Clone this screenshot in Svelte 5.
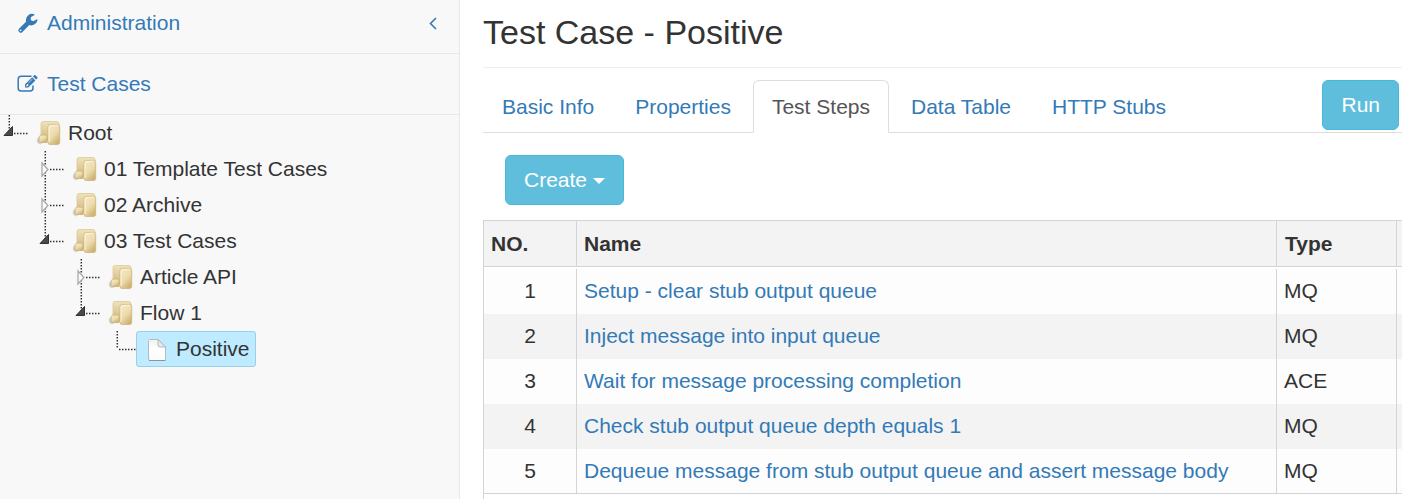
<script>
  const tree = {
    label: 'Root', open: true, children: [
      { label: '01 Template Test Cases', children: [] },
      { label: '02 Archive', children: [] },
      { label: '03 Test Cases', open: true, children: [
        { label: 'Article API', children: [] },
        { label: 'Flow 1', open: true, children: [{ label: 'Positive', leaf: true }] },
      ] },
    ],
  };
  const tabs = ['Basic Info', 'Properties', 'Test Steps', 'Data Table', 'HTTP Stubs'];
  const steps = [
    ['Setup - clear stub output queue', 'MQ'],
    ['Inject message into input queue', 'MQ'],
    ['Wait for message processing completion', 'ACE'],
    ['Check stub output queue depth equals 1', 'MQ'],
    ['Dequeue message from stub output queue and assert message body', 'MQ'],
  ];
  let active = $state('Test Steps');
</script>

<svelte:head><title>Test Case - Positive</title></svelte:head>

<svg class="defs" aria-hidden="true">
  <defs>
    <linearGradient id="gold" x1="0" y1="0" x2=".6" y2="1">
      <stop offset="0" stop-color="#f8eccb" /><stop offset=".6" stop-color="#ecdbac" /><stop offset="1" stop-color="#d0b475" />
    </linearGradient>
    <linearGradient id="back" x1="0" y1="0" x2="0" y2="1">
      <stop offset="0" stop-color="#f0e2ba" /><stop offset="1" stop-color="#cfb478" />
    </linearGradient>
    <linearGradient id="paper" x1="0" y1="0" x2="0" y2="1">
      <stop offset="0" stop-color="#f0f0f0" /><stop offset=".4" stop-color="#ffffff" /><stop offset="1" stop-color="#fafafa" />
    </linearGradient>
    <radialGradient id="shade">
      <stop offset="0" stop-color="#777" stop-opacity=".7" /><stop offset="1" stop-color="#777" stop-opacity="0" />
    </radialGradient>
  </defs>
</svg>

{#snippet node(item, last)}
  <li>
    <div class="row">
      <svg class="joint" viewBox="0 0 28 36" aria-hidden="true">
        <path class="dots" d={last ? 'M9.300 0V18' : 'M9.300 0V36'} />
        <path class="dots" d={item.leaf ? 'M11 18.500H28' : 'M14 18.500H28'} />
        {#if item.open}
          <path d="M12.500 11.500V20.500H4Z" fill="#4a4a4a" stroke="#333" />
        {:else if !item.leaf}
          <path d="M6 12L12 18.500L6 25Z" fill="#fafafa" stroke="#aaa" stroke-width="1.300" />
        {/if}
      </svg>
      <a href="#node" class="node" class:selected={item.leaf}>
        <svg class="icon" viewBox="0 0 26 28" aria-hidden="true">
          {#if item.leaf}
            <path d="M5.500 4.500H14L21.500 12V24.500Q21.500 25.500 20.500 25.500H6.500Q4.500 25.500 4.500 24V5.500Z" fill="url(#paper)" stroke="#b5bbbd" />
            <path d="M5 25.500H21.500" stroke="#8d9396" />
            <path d="M14 4.500V10Q14 12 16 12H21.500Z" fill="#e7eaeb" stroke="#b3b8ba" />
          {:else}
            <ellipse cx="4" cy="21.500" rx="4" ry="4.500" fill="url(#shade)" />
            <path d="M5 4.500Q5 2.500 7 2.500H20.500Q23 2.500 23 5V22.500H5Z" fill="url(#back)" stroke="#dac998" stroke-width=".8" />
            <path d="M4 17Q4 16 5 16H9.500Q11 16 11 17.500V23.500H4Q3 23.500 3 22.500V18.500Q3 17.500 4 17Z" fill="url(#gold)" stroke="#c8b077" stroke-width=".8" />
            <path d="M12 8Q12 5.600 14 5.500L21.500 5.300Q23.700 5.300 23.700 7.500V23.500Q23.700 25.500 21.700 25.500H14Q12 25.500 12 23.500Z" fill="url(#gold)" stroke="#cdb67f" stroke-width=".8" />
            <path d="M13 23V8Q13 6.500 14.500 6.400L22 6.200" fill="none" stroke="#fffae7" stroke-width=".8" />
          {/if}
        </svg>
        <span>{item.label}</span>
      </a>
    </div>
    {#if item.open}
      <ul>
        {#each item.children as child, i}
          {@render node(child, i === item.children.length - 1)}
        {/each}
      </ul>
    {/if}
  </li>
{/snippet}

<div class="page">
  <aside>
    <a class="menu" href="#admin">
      <svg class="glyph" viewBox="0 0 21 21" aria-hidden="true">
        <path fill="currentColor" fill-rule="evenodd" d="M2 15.700L9 8.800Q8.400 4.600 11.500 2Q14 0 17.300 1.200L17.500 1.900L13.800 4.200V7L16 8.300L20 6.200L20.500 6.600Q20.100 10.300 16.700 11.800Q14.200 12.800 12.300 12.100L5.200 19.200Q3.800 20.500 2.400 19.200L1.800 18.600Q.5 17.200 2 15.700ZM3.600 16.400A.9 .9 0 1 0 3.600 18.200A.9 .9 0 1 0 3.600 16.400Z" />
      </svg>
      <span>Administration</span>
      <svg class="chevron" viewBox="0 0 8 13" aria-hidden="true"><path d="M7 1L1.500 6.500L7 12" fill="none" stroke="currentColor" stroke-width="1.600" /></svg>
    </a>
    <a class="menu" href="#cases">
      <svg class="glyph" viewBox="0 0 21 21" aria-hidden="true">
        <path d="M14 2.200H4.200Q1.200 2.200 1.200 5.200V14Q1.200 17 4.200 17H13Q16 17 16 14V12" fill="none" stroke="currentColor" stroke-width="1.500" stroke-linecap="round" />
        <path fill="currentColor" fill-rule="evenodd" d="M15.200 3.200L18.400 6.400L11.300 13.500H8.100V10.300ZM9.400 11V12.200H10.600L11.700 11.100L10.500 9.900ZM11.300 9.500L15.400 5.400L15.100 5.100L11 9.200ZM16 2.400L17.100 1.300Q17.800 .7 18.500 1.300L20.200 3Q20.900 3.700 20.200 4.500L19.100 5.600Z" />
      </svg>
      <span>Test Cases</span>
    </a>
    <ul class="tree">{@render node(tree, true)}</ul>
  </aside>

  <main>
    <h1>Test Case - Positive</h1>
    <div class="bar">
      <nav>
        {#each tabs as tab}
          <button class="tab" class:active={tab === active} onclick={() => (active = tab)}>{tab}</button>
        {/each}
      </nav>
      <button class="btn">Run</button>
    </div>
    <div class="tools"><button class="btn">Create <span class="caret"></span></button></div>
    <div class="grid">
      <table>
        <thead>
          <tr><th class="no">NO.</th><th class="name">Name</th><th class="type">Type</th><th aria-label="Actions"></th></tr>
        </thead>
        <tbody>
          <tr class="space" aria-hidden="true"><td colspan="4"></td></tr>
          {#each steps as [name, type], i}
            <tr><td class="num">{i + 1}</td><td><a href="#step">{name}</a></td><td>{type}</td><td></td></tr>
          {/each}
        </tbody>
      </table>
    </div>
  </main>
</div>

<style>
  :global(body) { margin: 0; overflow: hidden; }
  * { box-sizing: border-box; }
  .page {
    display: flex;
    min-height: 100vh;
    font: 21px/30px "Liberation Sans", Arial, sans-serif;
    color: #333;
    background: #fff;
  }
  .defs { position: absolute; width: 0; height: 0; }
  a { color: #337ab7; text-decoration: none; }
  aside { flex: 0 0 460px; background: #f8f8f8; border-right: 1px solid #e7e7e7; }
  .menu {
    display: flex;
    align-items: center;
    height: 61px;
    padding: 0 22px 0 17px;
    border-bottom: 1px solid #e7e7e7;
  }
  .menu:first-child { height: 54px; padding-bottom: 7px; }
  .glyph { width: 21px; height: 21px; margin-right: 9px; }
  .chevron { width: 8px; height: 13px; margin-left: auto; }
  ul { list-style: none; margin: 0; padding: 0 0 0 36px; }
  .tree { padding: 0; }
  .row { display: flex; height: 36px; }
  .joint { flex: none; width: 28px; height: 36px; }
  .dots { fill: none; stroke: #333; stroke-width: 1.500; stroke-dasharray: 1.500 1.500; }
  .node {
    display: flex;
    align-items: center;
    padding: 0 5px 0 7px;
    border: 1px solid transparent;
    border-radius: 3px;
    color: #333;
    white-space: nowrap;
  }
  .selected { background: #beebff; border-color: #99d0e8; }
  .icon { width: 26px; height: 28px; margin-right: 6px; }
  main { flex: 1; min-width: 0; padding-left: 23px; display: flex; flex-direction: column; }
  h1 {
    margin: 0;
    padding: 11px 0 14px;
    border-bottom: 1px solid #eee;
    font-size: 34px;
    line-height: 42px;
    font-weight: 400;
  }
  .bar { display: flex; justify-content: space-between; margin-top: 12px; padding-right: 3px; height: 53px; border-bottom: 1px solid #ddd; }
  nav { display: flex; gap: 3px; }
  button { font: inherit; }
  .tab {
    height: 53px;
    padding: 0 18px;
    border: 1px solid transparent;
    border-radius: 6px 6px 0 0;
    background: none;
    color: #337ab7;
  }
  .active { background: #fff; border-color: #ddd #ddd #fff; color: #555; }
  .btn {
    height: 50px;
    padding: 0 18px;
    border: 1px solid #46b8da;
    border-radius: 6px;
    background: #5fbedc;
    color: #fff;
  }
  .tools { padding: 22px 22px 15px; display: flex; }
  .caret {
    display: inline-block;
    vertical-align: middle;
    border: 6px solid transparent;
    border-top-color: #fff;
    border-bottom: 0;
  }
  .grid { flex: 1; border: 1px solid #d4d4d4; border-width: 1px 0 0 1px; overflow: hidden; }
  table { width: 100%; table-layout: fixed; border-collapse: separate; border-spacing: 0; }
  th, td { height: 45px; padding: 0 7px; border-right: 1px solid #d4d4d4; text-align: left; white-space: nowrap; }
  td { padding-bottom: 1px; background: #fdfdfd; }
  th:last-child, td:last-child { padding: 0; border-right: 0; }
  th { height: 46px; background: #f3f3f3; border-bottom: 1px solid #d4d4d4; }
  .no { width: 93px; }
  .name { width: 700px; }
  .type { width: 120px; padding-left: 8px; }
  .num { text-align: center; }
  tr:nth-child(odd) td { background: #f3f3f3; }
  tr.space td { height: 2px; padding: 0; border: 0; background: #fff; }
  tr:last-child td { padding-bottom: 0; border-bottom: 1px solid #d4d4d4; }
</style>
